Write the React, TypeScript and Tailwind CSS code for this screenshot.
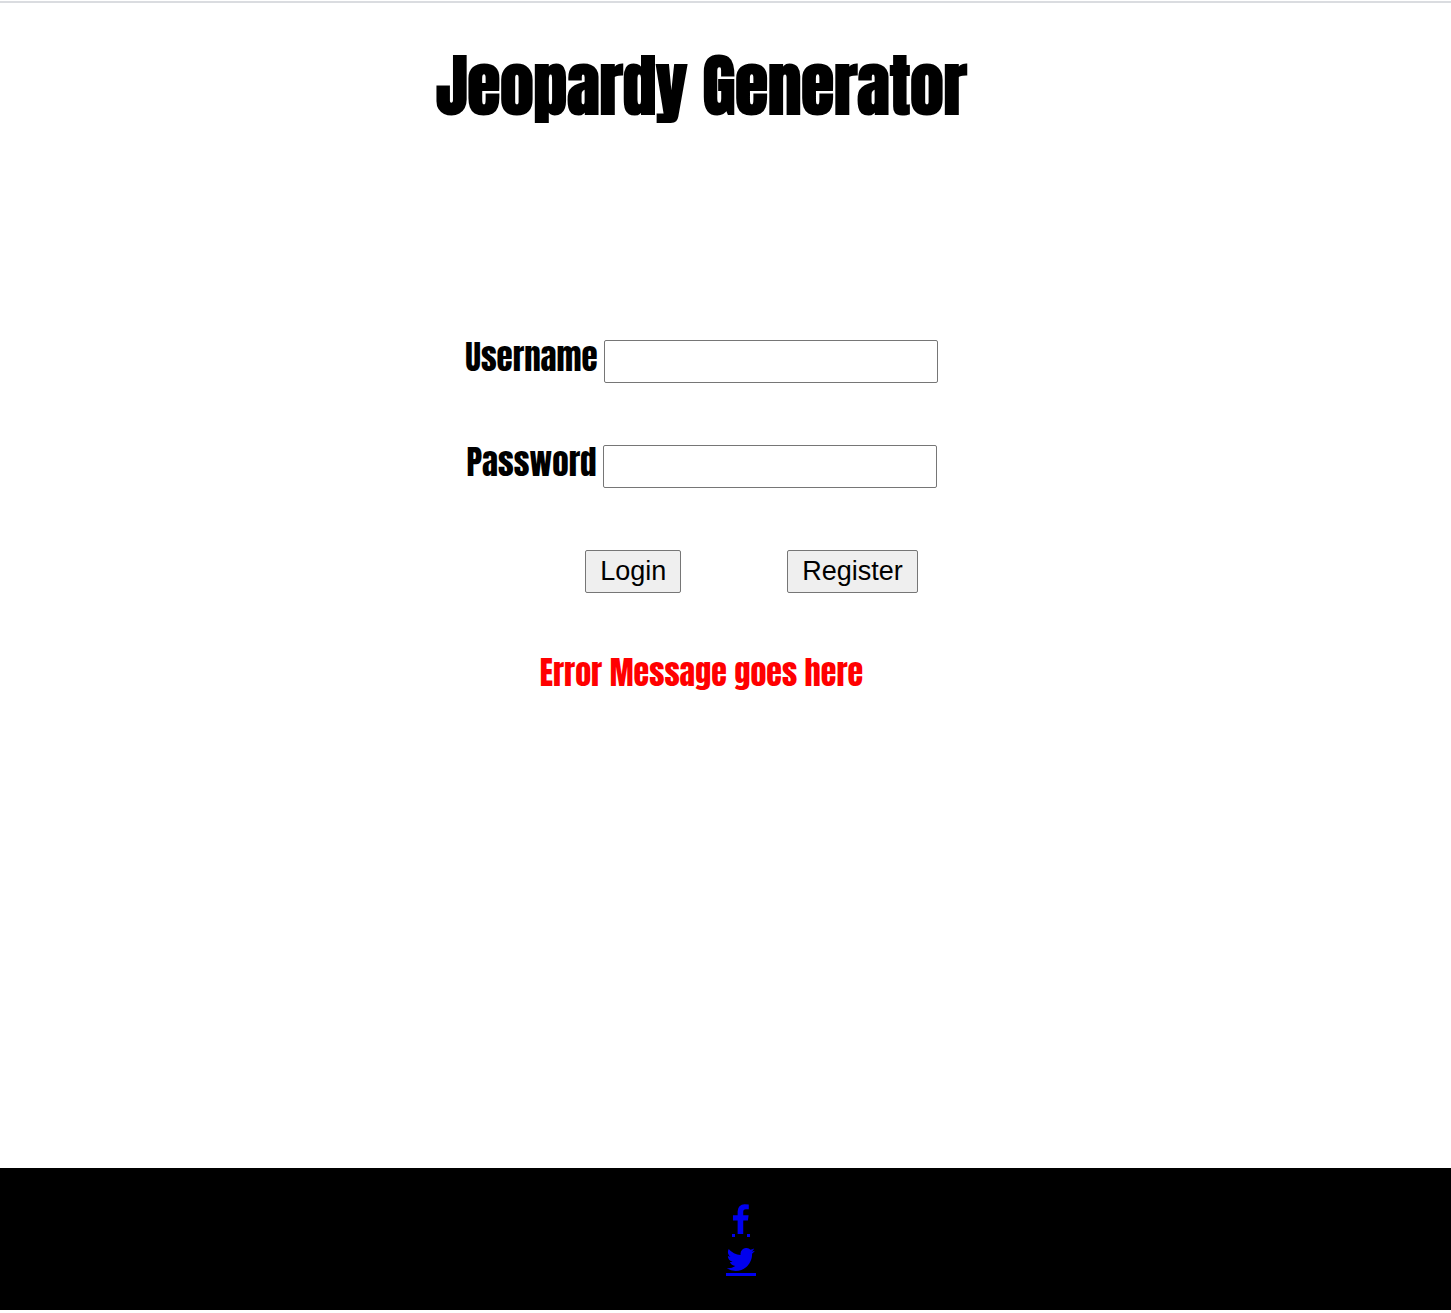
const display = 'font-[Impact,Anton,"Roboto_Condensed",sans-serif]';
const field = 'h-[43px] w-[334px] rounded-xs border border-[#767676] bg-white px-1 font-["Liberation_Sans",Arial,sans-serif] text-[27px]';
const button = 'h-[43px] rounded-xs border border-[#767676] bg-[#efefef] px-3.5 pb-px font-["Liberation_Sans",Arial,sans-serif] text-[27px] leading-9';

export default function App() {
  return (
    <div className={`${display} flex min-h-screen flex-col bg-white pb-[3px] text-black`}>
      <hr className="mt-px border-t-2 border-[#dadce0]" />
      <main className="flex flex-1 flex-col items-center pr-12">
        <h1 className="pt-8 text-[67px] leading-[102px] font-bold">Jeopardy Generator</h1>
        <form className="flex flex-col items-center gap-[62px] pt-[203px]" onSubmit={(e) => e.preventDefault()}>
          <div className="flex items-center gap-1.5">
            <label htmlFor="username" className="-mt-2 text-[33px] leading-[43px]">Username</label>
            <input id="username" type="text" className={field} />
          </div>
          <div className="flex items-center gap-1.5">
            <label htmlFor="password" className="-mt-2 text-[33px] leading-[43px]">Password</label>
            <input id="password" type="password" className={field} />
          </div>
          <div className="flex gap-[106px] pl-[100px]">
            <button type="submit" className={button}>Login</button>
            <button type="button" className={button}>Register</button>
          </div>
          <p role="alert" className="text-[32px] leading-9 text-[#ff0000]">Error Message goes here</p>
        </form>
      </main>
      <footer className="flex flex-col items-center gap-[11px] bg-black pt-9 pb-[34px] pl-[31px] text-[#0000ee]">
        <a href="#facebook" aria-label="Facebook">
          <svg className="block" width="18" height="33" viewBox="0 0 18 33" fill="currentColor">
            <path transform="translate(-7.8 0.3) scale(0.0183 0.0179)" d="M1343 12v264h-157q-86 0-116 36t-30 108v189h293l-39 296h-254v759h-306v-759h-255v-296h255v-218q0-186 104-288.500t277-102.500q147 0 228 12z" />
            <path d="M0 30h3v3H0zM15 30h3v3h-3z" />
          </svg>
        </a>
        <a href="#twitter" aria-label="Twitter">
          <svg className="block" width="30" height="28" viewBox="0 0 30 28" fill="currentColor">
            <path transform="translate(-1.2 -4.6) scale(0.0179)" d="M1684 408q-67 98-162 167 1 14 1 42 0 130-38 259.500t-115.500 248.500-184.500 210.500-258 146-323 54.500q-271 0-496-145 35 4 78 4 225 0 401-138-105-2-188-64.500t-114-159.500q33 5 61 5 43 0 85-11-112-23-185.500-111.500t-73.500-205.500v-4q68 38 146 41-66-44-105-115t-39-154q0-88 44-163 121 149 294.500 238.500t371.500 99.500q-8-38-8-74 0-134 94.500-228.500t228.500-94.500q140 0 236 102 109-21 205-78-37 115-142 184 93-10 186-50z" />
            <path d="M0 25h30v3H0z" />
          </svg>
        </a>
      </footer>
    </div>
  );
}
